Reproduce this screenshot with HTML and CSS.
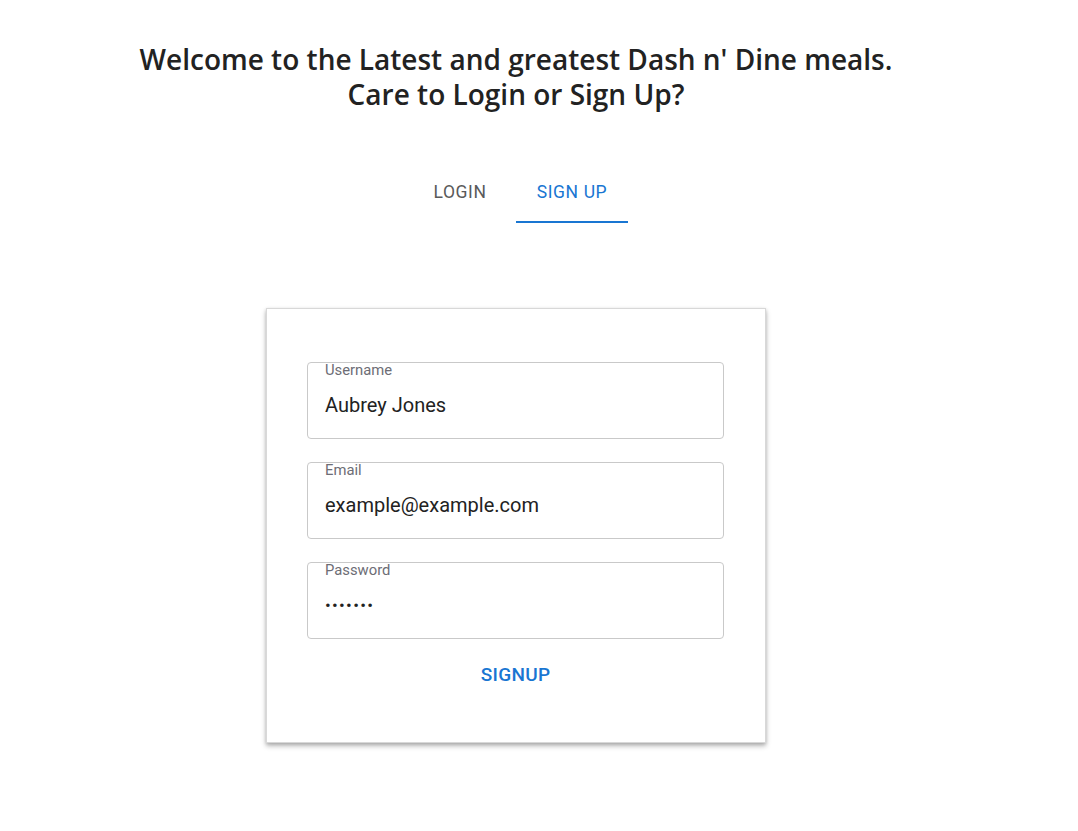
FILE: index.html
```html
<!DOCTYPE html>
<html>
<head>
<meta charset="utf-8">
<link rel="stylesheet" href="styles.css">
</head>
<body>
<div class="page">
  <h1 class="title">Welcome to the Latest and greatest Dash n' Dine meals.<br>Care to Login or Sign Up?</h1>
  <nav class="tabs">
    <div class="tab">LOGIN</div>
    <div class="tab active">SIGN UP</div>
  </nav>
  <form class="card">
    <label class="field">
      <span class="label">Username</span>
      <span class="value">Aubrey Jones</span>
    </label>
    <label class="field">
      <span class="label">Email</span>
      <span class="value">example@example.com</span>
    </label>
    <label class="field">
      <span class="label">Password</span>
      <span class="value dots">•••••••</span>
    </label>
    <div class="actions"><span class="btn">SIGNUP</span></div>
  </form>
</div>
</body>
</html>
```
FILE: styles.css
```css
* { box-sizing: border-box; }
html, body { margin: 0; padding: 0; background: #fff; }
body { font-family: Roboto, "Liberation Sans", sans-serif; color: #222; }
.page {
  width: 1032px;
  display: flex;
  flex-direction: column;
  align-items: center;
  padding-top: 42px;
  padding-bottom: 60px;
}
.title {
  margin: 0;
  font-family: "Open Sans", "Noto Sans", sans-serif;
  font-weight: 600;
  font-size: 28px;
  line-height: 35px;
  text-align: center;
  color: #222;
}
.tabs {
  display: flex;
  margin-top: 51px;
}
.tab {
  width: 112px;
  height: 60px;
  display: flex;
  align-items: center;
  justify-content: center;
  font-size: 17.5px;
  font-weight: 400;
  color: #5a5a5a;
  letter-spacing: 0.6px;
  border-bottom: 2px solid transparent;
}
.tab.active { color: #1976d2; border-bottom-color: #1976d2; }
.card {
  margin-top: 85px;
  width: 500px;
  border: 1px solid #d8d8d8;
  box-shadow: 0 3px 5px rgba(0,0,0,0.28), 0 1px 3px rgba(0,0,0,0.12);
  padding: 53px 41px 54px 40px;
  display: flex;
  flex-direction: column;
  gap: 23px;
}
.field {
  height: 77px;
  border: 1px solid #c9c9c9;
  border-radius: 4px;
  display: flex;
  flex-direction: column;
  padding: 0 17px;
}
.label {
  font-size: 14.8px;
  color: #6d6d75;
  line-height: 15px;
  margin-top: 0;
}
.value {
  font-size: 20px;
  color: #222;
  margin-top: 13px;
  line-height: 28px;
}
.value.dots { font-size: 17px; letter-spacing: 1.3px; }
.actions {
  display: flex;
  justify-content: center;
}
.btn {
  font-size: 19px;
  font-weight: 500;
  color: #1976d2;
  letter-spacing: 0.3px;
  line-height: 26px;
}
```
